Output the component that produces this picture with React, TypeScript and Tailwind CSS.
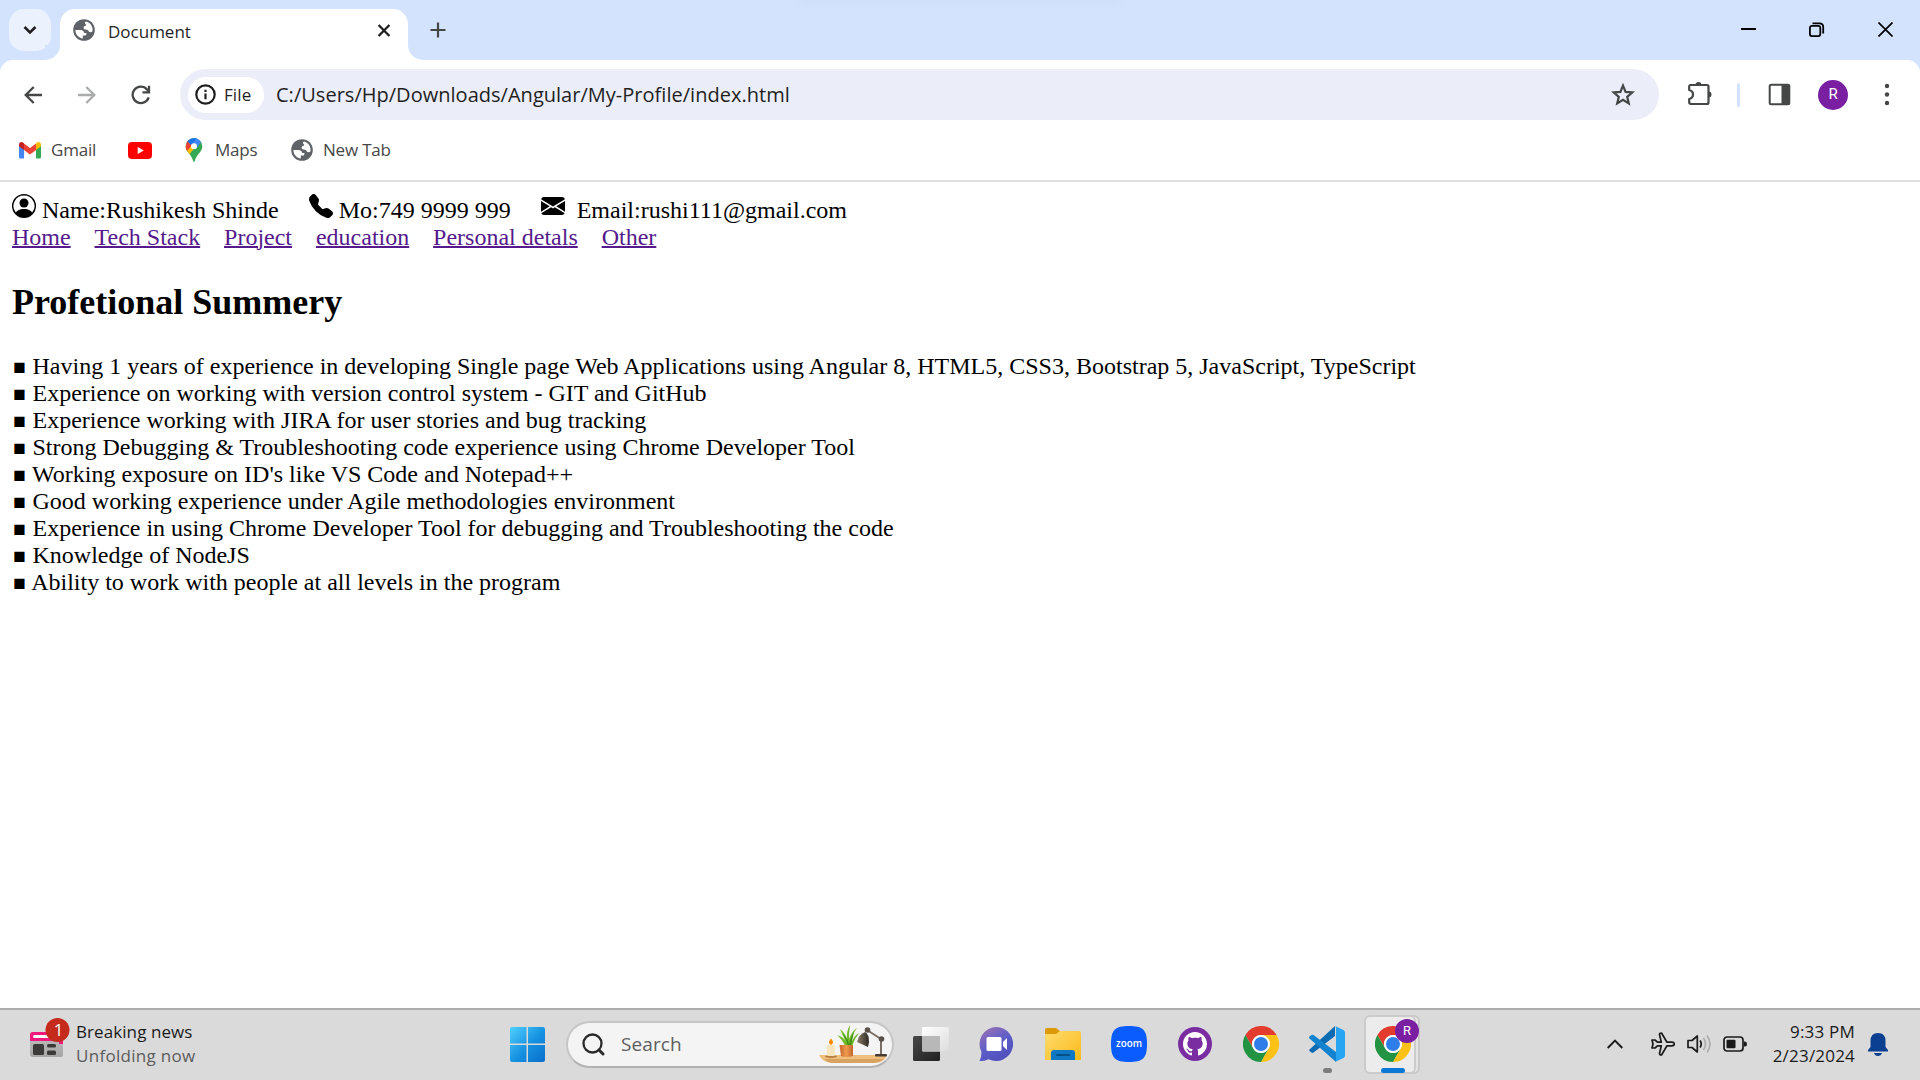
import type { ReactNode } from "react";
import { BsPersonCircle, BsTelephoneFill, BsEnvelopeFill, BsGithub } from "react-icons/bs";

function Globe() {
  return (
    <svg className="shrink-0" width="22" height="22" viewBox="0 0 22 22">
      <circle cx="11" cy="11" r="10.800" fill="#5f6368" />
      <path d="M13.200 2.600C17 3.700 19.600 7 19.600 11L19.200 12.800C18 13.600 16.300 13.200 15.600 12.200C15 11 14.200 10.800 12.800 10.600C10.800 10.200 10 8.800 11 7.500C11.500 6.800 12.600 6.900 13 6.200C13.400 5.400 11.800 4.600 11.800 3.600Z" fill="#fff" />
      <path d="M2.400 11H7.200C9.600 11 11 12.200 11.200 14H13.400C13.600 15.600 13 16.600 11.400 16.600H9.800V19.500C5.600 19 2.400 15.500 2.400 11Z" fill="#fff" />
    </svg>
  );
}

function TabStrip() {
  return (
    <div className="relative flex h-[60px] items-start bg-[#d3e3fd]">
      <div className="absolute left-[800px] top-0 h-[3px] w-[320px] bg-[#c9daf5] blur-[3px]" />
      <button className="ml-[9px] mt-[9px] flex h-[42px] w-[42px] items-center justify-center rounded-[15px] bg-[#ebf2fe]">
        <svg width="14" height="10" viewBox="0 0 14 10" fill="none" stroke="#1f1f1f" strokeWidth="2.6">
          <path d="M1.5 2 7 7.4 12.500 2" />
        </svg>
      </button>
      <div className="relative ml-[9px] mt-[9px] flex h-[51px] w-[348px] items-start rounded-t-[15px] bg-white pl-[13px]">
        <span className="absolute -left-[15px] bottom-0 h-[15px] w-[15px] bg-white">
          <span className="block h-full w-full rounded-br-[15px] bg-[#d3e3fd]" />
        </span>
        <span className="absolute -right-[15px] bottom-0 h-[15px] w-[15px] bg-white">
          <span className="block h-full w-full rounded-bl-[15px] bg-[#d3e3fd]" />
        </span>
        <span className="mt-[10px]"><Globe /></span>
        <span className="ml-[13px] mt-[11px] text-[17px] leading-[24px] text-[#1f1f1f]">Document</span>
        <svg className="absolute left-[318px] top-[15px]" width="12" height="13" viewBox="0 0 12 13" stroke="#1f1f1f" strokeWidth="2.2">
          <path d="M.6 1 11.400 12M11.400 1 .6 12" />
        </svg>
      </div>
      <svg className="ml-[22px] mt-[22px]" width="16" height="16" viewBox="0 0 16 16" stroke="#444746" strokeWidth="2.2">
        <path d="M8 0.500V15.500M.5 8H15.500" />
      </svg>
      <div className="ml-auto mr-[27px] flex items-start gap-[53px] pt-[22px]">
        <svg width="15" height="15" viewBox="0 0 15 15"><rect x="0" y="6" width="15" height="2" fill="#000" /></svg>
        <svg width="16" height="15" viewBox="0 0 16 15" fill="none" stroke="#000" strokeWidth="1.8">
          <rect x="0.9" y="3.9" width="10.400" height="10.200" rx="2" />
          <path d="M3.500 1.300H10.500Q14.200 1.300 14.200 5V11.500" />
        </svg>
        <svg width="15" height="15" viewBox="0 0 15 15" stroke="#000" strokeWidth="1.700">
          <path d="M.5 .5 14.500 14.500M14.500 .5 .5 14.500" />
        </svg>
      </div>
    </div>
  );
}

function Toolbar() {
  return (
    <div className="bg-[#d3e3fd]">
      <div className="flex h-[69px] items-center rounded-t-[13px] bg-white">
        <svg className="ml-[24px]" width="18" height="18" viewBox="0 0 18 18" fill="none" stroke="#444746" strokeWidth="2.300">
          <path d="M18 9H1.800M9.700 1 1.700 9 9.700 17" />
        </svg>
        <svg className="ml-[36px]" width="18" height="18" viewBox="0 0 18 18" fill="none" stroke="#aaabab" strokeWidth="2.300">
          <path d="M0 9H16.200M8.300 1 16.300 9 8.300 17" />
        </svg>
        <svg className="ml-[35px]" width="20" height="20" viewBox="0 0 20 20" fill="none" stroke="#444746" strokeWidth="2.300">
          <path d="M17.700 12.300A8.200 8.200 0 1 1 16 4.400L18 6.500" />
          <path d="M18 .8V7.400H11.500" />
        </svg>
        <div className="ml-[29px] flex h-[51px] w-[1479px] items-center rounded-full bg-[#ebeef8] pl-[8px]">
          <div className="flex h-[36px] w-[76px] items-center rounded-full bg-white pl-[7px]">
            <svg width="21" height="21" viewBox="0 0 21 21" fill="none" stroke="#1f1f1f" strokeWidth="2.200">
              <circle cx="10.500" cy="10.500" r="9.200" />
              <path d="M10.500 9.500V15.300M10.500 5.800V8" />
            </svg>
            <span className="ml-[8px] text-[17px] font-medium tracking-[0.1px] text-[#1f1f1f]">File</span>
          </div>
          <span className="ml-[12px] text-[20px] tracking-[0.02px] text-[#1f1f1f]">C:/Users/Hp/Downloads/Angular/My-Profile/index.html</span>
          <svg className="ml-auto mr-[24px]" width="24" height="23" viewBox="0 0 24 23" fill="none" stroke="#444746" strokeWidth="2.200">
            <path d="M12 2.600 14.600 8.900 21.300 9.400 16.200 13.800 17.800 20.500 12 16.900 6.200 20.500 7.800 13.800 2.700 9.400 9.400 8.900Z" />
          </svg>
        </div>
        <svg className="-mt-[4px] ml-[28px]" width="26" height="26" viewBox="0 0 26 26" fill="none" stroke="#444746" strokeWidth="2.2">
          <path d="M3.200 5H20Q21.500 5 21.500 6.500V22.500Q21.500 24 20 24H4.500Q2.200 24 2.200 22.500V19Q6 18 6 14.500T2.200 10V6.500Q2.200 5 3.200 5Z" strokeLinejoin="round" />
          <path d="M8.500 5A3 3 0 0 1 14.500 5ZM21.500 11.500A3 3 0 0 1 21.500 17.500Z" fill="#444746" stroke="none" />
        </svg>
        <span className="ml-[24px] h-[24px] w-[3px] rounded-full bg-[#d3e3fd]" />
        <svg className="ml-[28px]" width="23" height="23" viewBox="0 0 23 23">
          <rect x="1.700" y="1.700" width="19.600" height="19.600" rx="1.500" fill="none" stroke="#444746" strokeWidth="2" />
          <path d="M13.500 1H20Q22 1 22 3V20Q22 22 20 22H13.500Z" fill="#444746" />
        </svg>
        <span className="ml-[27px] flex h-[30px] w-[30px] items-center justify-center rounded-full bg-[#7b1fa2] font-[Roboto] text-[15px] text-white">R</span>
        <svg className="ml-[36px]" width="6" height="23" viewBox="0 0 6 23" fill="#444746">
          <circle cx="3" cy="3" r="2.200" /><circle cx="3" cy="11.500" r="2.200" /><circle cx="3" cy="20" r="2.200" />
        </svg>
      </div>
    </div>
  );
}

function Bookmarks() {
  return (
    <div className="flex h-[53px] items-center border-b-2 border-[#dfdfdf] bg-white pb-[9px] text-[17px] tracking-[-0.2px] text-[#474747]">
      <svg className="ml-[19px]" width="22" height="17" viewBox="0 0 22 17">
        <path d="M0 3V15Q0 16.500 1.500 16.500H5V7Z" fill="#4285f4" />
        <path d="M22 3V15Q22 16.500 20.500 16.500H17V7Z" fill="#34a853" />
        <path d="M17 1.500V8L22 4.300V2.500C22 .2 19.500-.8 17.600 .8Z" fill="#fbbc04" />
        <path d="M5 8V1.500L11 6 17 1.500V8L11 12.400Z" fill="#ea4335" />
        <path d="M0 2.500V4.300L5 8V1.500L4.400 .8C2.500-.8 0 .2 0 2.500Z" fill="#c5221f" />
      </svg>
      <span className="ml-[10px] w-[46px]">Gmail</span>
      <svg className="ml-[31px]" width="24" height="17" viewBox="0 0 24 17">
        <rect width="24" height="17" rx="4" fill="#f00" />
        <path d="M9.700 5 15.800 8.500 9.700 12Z" fill="#fff" />
      </svg>
      <svg className="ml-[33px]" width="18" height="24" viewBox="0 0 18 24">
        <defs><clipPath id="pin"><path d="M9 0A8.500 8.500 0 0 1 17.300 8.500C17.300 14 11.500 16 9.700 23.300Q9 24.500 8.300 23.300C6.500 16 .7 14 .7 8.500A8.500 8.500 0 0 1 9 0Z" /></clipPath></defs>
        <g clipPath="url(#pin)">
          <rect width="18" height="24" fill="#34a853" />
          <path d="M16 2 3 18 1 12 9 4Z" fill="#fbbc04" />
          <path d="M-1 3 3 2 8 6 2 13-1 12Z" fill="#ea4335" />
          <path d="M2 3 5 0H13L9 5 6 7Z" fill="#1a73e8" />
          <path d="M11.500 0 18 2 17 3 11 11 8 5Z" fill="#4285f4" />
        </g>
        <circle cx="9" cy="8.300" r="3" fill="#fff" />
      </svg>
      <span className="ml-[12px] w-[43px]">Maps</span>
      <span className="ml-[33px]"><Globe /></span>
      <span className="ml-[10px]">New Tab</span>
    </div>
  );
}

const links = ["Home", "Tech Stack", "Project", "education", "Personal detals", "Other"];
const summary = [
  "Having 1 years of experience in developing Single page Web Applications using Angular 8, HTML5, CSS3, Bootstrap 5, JavaScript, TypeScript",
  "Experience on working with version control system - GIT and GitHub",
  "Experience working with JIRA for user stories and bug tracking",
  "Strong Debugging & Troubleshooting code experience using Chrome Developer Tool",
  "Working exposure on ID's like VS Code and Notepad++",
  "Good working experience under Agile methodologies environment",
  "Experience in using Chrome Developer Tool for debugging and Troubleshooting the code",
  "Knowledge of NodeJS",
  "Ability to work with people at all levels in the program",
];

function Profile() {
  return (
    <main className="flex-1 bg-white p-3 font-['Liberation_Serif',serif] text-[24px] leading-[27px] text-black">
      <div className="flex h-[30px]">
        <BsPersonCircle className="h-6 w-6" />
        <span className="ml-[6px] mt-[3px]">Name:Rushikesh Shinde</span>
        <BsTelephoneFill className="ml-[30px] h-6 w-6" />
        <span className="ml-[6px] mt-[3px]">Mo:749 9999 999</span>
        <BsEnvelopeFill className="ml-[30px] h-6 w-6" />
        <span className="ml-[12px] mt-[3px]">Email:rushi111@gmail.com</span>
      </div>
      <nav className="flex gap-[23.9px]">
        {links.map((l) => (
          <a key={l} className="text-[#551a8b] underline decoration-2">{l}</a>
        ))}
      </nav>
      <h2 className="mb-[30px] mt-[31px] text-[36px] font-bold leading-[41px]">Profetional Summery</h2>
      <ul>
        {summary.map((s) => (
          <li key={s} className="flex h-[27px] whitespace-pre">
            <span className="mt-px w-[15px] text-center text-[21px]">■</span>
            <span className="-ml-[0.5px]"> {s}</span>
          </li>
        ))}
      </ul>
    </main>
  );
}

function Chrome() {
  return (
    <svg width="36" height="36" viewBox="0 0 36 36">
      <path d="M2.400 9A18 18 0 0 1 33.600 9H18A9 9 0 0 0 10.200 22.500Z" fill="#e33b2e" />
      <path d="M2.400 9A18 18 0 0 0 18 36L25.800 22.500A9 9 0 0 1 10.200 22.500Z" fill="#229342" />
      <path d="M33.600 9A18 18 0 0 1 18 36L25.800 22.500A9 9 0 0 0 18 9Z" fill="#fbc116" />
      <circle cx="18" cy="18" r="9" fill="#fff" />
      <circle cx="18" cy="18" r="7" fill="#2f7de9" />
    </svg>
  );
}

function Cell({ children }: { children: ReactNode }) {
  return <div className="relative flex h-full w-[66px] shrink-0 items-center justify-center">{children}</div>;
}

function Taskbar() {
  return (
    <footer className="flex h-[72px] items-center border-t-2 border-[#adadad] bg-[#dadada] pb-[2px] text-[17px] text-[#1b1b1b]">
      <div className="flex w-[494px] items-center">
        <svg className="-mt-[10px] ml-[30px]" width="41" height="42" viewBox="0 0 41 42">
          <defs><linearGradient id="np" x2="0" y2="1"><stop stopColor="#c2c2c2" /><stop offset="1" stopColor="#a5a5a5" /></linearGradient></defs>
          <path d="M0 17Q0 14 3 14H33V37Q33 39 30 39H3Q0 39 0 36Z" fill="url(#np)" />
          <path d="M0 23V17Q0 14 3 14H33V26H29V23Z" fill="#f0197d" />
          <rect x="3" y="17" width="17" height="3" rx="1.500" fill="#fff" />
          <rect x="3" y="26" width="11" height="11" rx="1.500" fill="#3b3a39" />
          <rect x="17" y="26" width="9" height="3.600" rx="1.500" fill="#3b3a39" />
          <rect x="17" y="32.500" width="9" height="4.500" rx="1.500" fill="#3b3a39" />
          <circle cx="27.500" cy="12" r="12" fill="#c42b1c" />
          <text x="28.500" y="18" textAnchor="middle" fontSize="17" fill="#fff">1</text>
        </svg>
        <div className="ml-[5px] leading-[24px]">
          <div className="tracking-[0.08px]">Breaking news</div>
          <div className="tracking-[0.3px] text-[#5c5c5c]">Unfolding now</div>
        </div>
      </div>
      <Cell>
        <svg width="35" height="35" viewBox="0 0 35 35">
          <defs><linearGradient id="win" x2="1" y2="1"><stop stopColor="#4fd0ff" /><stop offset=".55" stopColor="#1590e0" /><stop offset="1" stopColor="#0a6fcc" /></linearGradient></defs>
          <path d="M2 0H16.500V16.500H0V2Q0 0 2 0ZM18 0H33Q35 0 35 2V16.500H18ZM0 18H16.500V35H2Q0 35 0 33ZM18 18H35V33Q35 35 33 35H18Z" fill="url(#win)" />
        </svg>
      </Cell>
      <div className="ml-[6px] flex h-[47px] w-[328px] items-center rounded-full border-2 border-[#c6c6c6] border-b-[#b2b2b2] bg-[#f4f4f4] pl-[14px]">
        <svg width="23" height="23" viewBox="0 0 23 23" fill="none" stroke="#2a2a2a" strokeLinecap="round">
          <circle cx="10.500" cy="10.500" r="9" strokeWidth="2.300" /><path d="M17 17 21 21" strokeWidth="3" />
        </svg>
        <span className="ml-[16px] text-[19px] tracking-[0.1px] text-[#5d5d5d]">Search</span>
        <svg className="ml-auto mr-[4px]" width="70" height="40" viewBox="0 0 70 40">
          <defs>
            <linearGradient id="pot"><stop stopColor="#c8652a" /><stop offset=".5" stopColor="#ee9a4c" /><stop offset="1" stopColor="#c4662b" /></linearGradient>
            <linearGradient id="shade"><stop stopColor="#8b7d6a" /><stop offset="1" stopColor="#2e2823" /></linearGradient>
          </defs>
          <path d="M1 31H69Q67 38 57 39H14Q4 38 1 31Z" fill="#eebf7e" />
          <path d="M6 35H66Q62 38.500 56 39H14Q9 38 6 35Z" fill="#d8a260" />
          <ellipse cx="13" cy="32.500" rx="6" ry="1.500" fill="#b9803f" />
          <rect x="9" y="21" width="8" height="11" rx="1.500" fill="#f8e4bd" />
          <path d="M13 14.500Q17 19 13 21 9 19 13 14.500Z" fill="#ff8c00" />
          <path d="M27 22Q24 15 19 11 26 13 28 18 24 10 22 5 29 11 29 17 28 7 32 1 31 9 31 15 34 7 39 4 34 10 34 17 37 11 41 9 37 14 34 22Z" fill="#71b929" />
          <path d="M30 22Q28 15 25 10 31 16 31 21 33 12 36 8 34 16 33 22Z" fill="#3f8f16" />
          <path d="M21.500 21H35V32Q28 34 23 32Z" fill="url(#pot)" />
          <path d="M49 6 63 15V32" fill="none" stroke="#7b6e65" strokeWidth="2" />
          <path d="M47 8Q51 10 51 18L50 23 39 18Q41 10 47 8Z" fill="url(#shade)" />
          <circle cx="49.500" cy="6" r="2.800" fill="#5b5049" /><circle cx="63.500" cy="15" r="2.800" fill="#5b5049" />
          <rect x="57" y="30" width="12" height="2.600" rx="1" fill="#453b33" />
        </svg>
      </div>
      <div className="ml-[4px] flex h-full">
        <Cell>
          <svg width="36" height="36" viewBox="0 0 36 36">
            <defs>
              <linearGradient id="tv" x2="1" y2="1"><stop stopColor="#474747" /><stop offset="1" stopColor="#202020" /></linearGradient>
              <linearGradient id="tw" x2="1" y2="1"><stop stopColor="#fff" /><stop offset="1" stopColor="#dcdcdc" /></linearGradient>
            </defs>
            <rect x="0" y="10" width="27" height="25" rx="1.500" fill="url(#tv)" />
            <rect x="9" y="1" width="27" height="24.500" rx="1.500" fill="url(#tw)" />
            <path d="M9 10H27V25.500H10.500Q9 25.500 9 24Z" fill="#b8b8b8" />
          </svg>
        </Cell>
        <Cell>
          <svg width="36" height="36" viewBox="0 0 36 36">
            <defs><linearGradient id="tm" x2="0.600" y2="1"><stop stopColor="#a074b4" /><stop offset=".6" stopColor="#5b5cc8" /><stop offset="1" stopColor="#5150bd" /></linearGradient></defs>
            <path d="M17.500 1A17 17 0 1 1 9.500 33.200Q4.500 35.500 .5 35 2.500 31 2.500 26A17 17 0 0 1 17.500 1Z" fill="url(#tm)" />
            <rect x="7.500" y="11" width="15" height="14" rx="1.500" fill="#fff" />
            <path d="M24 16 28 12V24L24 20Z" fill="#fff" />
          </svg>
        </Cell>
        <Cell>
          <svg width="36" height="36" viewBox="0 0 36 36">
            <defs><linearGradient id="fo" x2="1" y2="1"><stop stopColor="#ffdc6f" /><stop offset="1" stopColor="#fab919" /></linearGradient></defs>
            <path d="M0 4Q0 2 2 2H11L15 5V9H0Z" fill="#dd9a08" />
            <path d="M0 8H11L15 5H34Q36 5 36 7V34H0Z" fill="url(#fo)" />
            <path d="M6 34V27Q6 24 9 24H27Q30 24 30 27V34Z" fill="#0f78c4" />
            <rect x="11" y="28" width="14" height="2" rx="1" fill="#084f86" />
          </svg>
        </Cell>
        <Cell>
          <svg width="36" height="36" viewBox="0 0 36 36">
            <path d="M18 0C32 0 36 4 36 18S32 36 18 36 0 32 0 18 4 0 18 0Z" fill="#0b5cff" />
            <text x="18" y="21" textAnchor="middle" fontSize="11.500" fontWeight="600" fill="#fff" textLength="26" lengthAdjust="spacingAndGlyphs">zoom</text>
          </svg>
        </Cell>
        <Cell>
          <span className="flex h-[34px] w-[34px] items-center justify-center rounded-full bg-[#7a2da1]">
            <BsGithub className="h-[24px] w-[24px] text-white" />
          </span>
        </Cell>
        <Cell><Chrome /></Cell>
        <Cell>
          <svg width="36" height="36" viewBox="0 0 36 36">
            <path d="M.5 23.500 26 0V10L4.500 26.500Q3.500 27.300 2.500 26.500L.5 25Q-.3 24.300 .5 23.500Z" fill="#0b6bb3" />
            <path d="M.5 10.500 2.500 9Q3.500 8.500 4.500 9L27 26V36L.5 12.500Q-.5 11.500 .5 10.500Z" fill="#1383cf" />
            <path d="M26 0 34.500 4Q36 5 36 6.500V29.500Q36 31 34.500 32L26 36Q27 35.500 27 34V2Q27 .5 26 0Z" fill="#27a4f2" />
          </svg>
          <span className="absolute bottom-[5px] left-[29px] h-[5px] w-[9px] rounded-full bg-[#7c7c7c]" />
        </Cell>
        <Cell>
          <span className="absolute left-[11px] top-[5px] h-[59px] w-[49px] rounded-[6px] border-2 border-[#c9c9c9] bg-[#e4e4e4]" />
          <span className="absolute left-[4px] top-[5px] h-[59px] w-[52px] rounded-[6px] border-2 border-[#cbcbcb] bg-[#ececec]" />
          <span className="relative"><Chrome /></span>
          <span className="absolute left-[35px] top-[9px] flex h-[24px] w-[24px] items-center justify-center rounded-full bg-[#7b1fa2] font-[Roboto] text-[13px] text-white">R</span>
          <span className="absolute bottom-[5px] left-[21px] h-[5px] w-[24px] rounded-full bg-[#0a78d4]" />
        </Cell>
      </div>
      <svg className="ml-auto" width="16" height="10" viewBox="0 0 16 10" fill="none" stroke="#1b1b1b" strokeWidth="1.900"><path d="M.7 9 8 1.500 15.300 9" /></svg>
      <svg className="ml-[28px]" width="24" height="24" viewBox="0 0 24 24" fill="none" stroke="#1b1b1b" strokeWidth="1.700" strokeLinejoin="round">
        <path d="M1 8H4L6.500 10.200H10.300L8.500 2.500Q8.500 1 10.500 1L16 10.200H21Q23.300 10.500 23.300 12T21 13.800H16L10.500 23Q8.500 23 8.500 21.500L10.300 13.800H6.500L4 16H1L2 12Z" />
      </svg>
      <svg className="ml-[12px]" width="24" height="22" viewBox="0 0 24 22" fill="none" stroke="#1b1b1b" strokeWidth="1.700" strokeLinejoin="round">
        <path d="M1 7.500H5L10.300 3V19L5 14.500H1Z" />
        <path d="M13 7.500Q15.500 11 13 14.500" />
        <path d="M16.500 5Q20.500 11 16.500 17M20 2.500Q26 11 20 19.500" stroke="#adadad" />
      </svg>
      <svg className="ml-[12px]" width="24" height="16" viewBox="0 0 24 16">
        <rect x="1" y="1" width="19" height="14" rx="3" fill="none" stroke="#1b1b1b" strokeWidth="1.700" />
        <rect x="3.500" y="3.700" width="9" height="8.600" rx="1" fill="#1b1b1b" />
        <path d="M21 5.500H22Q24 5.500 24 8T22 10.500H21Z" fill="#1b1b1b" />
      </svg>
      <div className="w-[108px] text-right leading-[24px] tracking-[0.2px]">
        <div>9:33 PM</div>
        <div>2/23/2024</div>
      </div>
      <svg className="ml-[13px] mr-[32px]" width="20" height="23" viewBox="0 0 20 23" fill="#0a3f91">
        <path d="M10 0Q17.500 0 17.500 8V14L20 17V18.500H0V17L2.500 14V8Q2.500 0 10 0ZM6 20H14Q13 23 10 23T6 20Z" />
      </svg>
    </footer>
  );
}

export default function App() {
  return (
    <div className="flex h-[1080px] w-[1920px] flex-col overflow-hidden font-['Open_Sans',sans-serif]">
      <TabStrip />
      <Toolbar />
      <Bookmarks />
      <Profile />
      <Taskbar />
    </div>
  );
}
